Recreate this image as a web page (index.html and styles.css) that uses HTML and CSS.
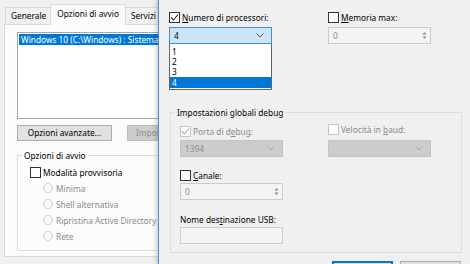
FILE: index.html
```html
<!DOCTYPE html>
<html lang="it">
<head>
  <meta charset="UTF-8">
  <title>Configurazione di sistema - Opzioni di avvio avanzate</title>
  <link rel="stylesheet" href="styles.css">
</head>
<body>
  <!-- background window: msconfig, boot tab -->
  <div class="window msconfig">
    <div class="tabs">
      <div class="tab">Generale</div>
      <div class="tab active">Opzioni di avvio</div>
      <div class="tab">Servizi</div>
      <div class="tab">Avvio</div>
    </div>
    <div class="tab-panel">
      <div class="listbox">
        <div class="list-row selected">Windows 10 (C:\Windows) : Sistema operativo corrente; Sistema operativo predefinito</div>
      </div>
      <div class="button-row">
        <div class="button wide">Opzioni avanzate...</div>
        <div class="button disabled">Imposta come predefinito</div>
      </div>
      <fieldset class="group boot-group">
        <legend>Opzioni di avvio</legend>
        <div class="group-body">
          <div class="check-row">
            <span class="checkbox"></span>
            <span>Modalità provvisoria</span>
          </div>
          <div class="radio-row"><span class="radio"></span><span>Minima</span></div>
          <div class="radio-row"><span class="radio"></span><span>Shell alternativa</span></div>
          <div class="radio-row"><span class="radio"></span><span>Ripristina Active Directory</span></div>
          <div class="radio-row"><span class="radio"></span><span>Rete</span></div>
        </div>
      </fieldset>
    </div>
  </div>

  <!-- foreground dialog: advanced boot options -->
  <div class="window dialog">
    <div class="columns top-columns">
      <div class="col">
        <div class="check-row">
          <span class="checkbox checked">
            <svg width="9" height="9" viewBox="0 0 9 9"><polyline points="1,4.5 3.5,7 8,1.5" fill="none" stroke="#222" stroke-width="1.1"/></svg>
          </span>
          <span><u>N</u>umero di processori:</span>
        </div>
        <div class="combo-wrap">
          <div class="combo focused">
            <span>4</span>
            <svg class="chevron" width="8" height="5" viewBox="0 0 8 5"><polyline points="0.5,0.5 4,4 7.5,0.5" fill="none" stroke="#555" stroke-width="1"/></svg>
          </div>
          <div class="dropdown">
            <div class="dropdown-item">1</div>
            <div class="dropdown-item">2</div>
            <div class="dropdown-item">3</div>
            <div class="dropdown-item selected">4</div>
          </div>
        </div>
      </div>
      <div class="col">
        <div class="check-row">
          <span class="checkbox"></span>
          <span><u>M</u>emoria max:</span>
        </div>
        <div class="spinbox">
          <span>0</span>
          <span class="spin-arrows">
            <svg width="5" height="9" viewBox="0 0 5 9"><polygon points="2.5,1 4.5,3.5 0.5,3.5" fill="#8a8a8a"/><polygon points="0.5,5.5 4.5,5.5 2.5,8" fill="#8a8a8a"/></svg>
          </span>
        </div>
      </div>
    </div>

    <fieldset class="group debug-group">
      <legend>Impostazioni globali debug</legend>
      <div class="columns debug-columns">
        <div class="col">
          <div class="check-row disabled-text porta">
            <span class="checkbox checked disabled">
              <svg width="9" height="9" viewBox="0 0 9 9"><polyline points="1,4.5 3.5,7 8,1.5" fill="none" stroke="#a8a8a8" stroke-width="1.1"/></svg>
            </span>
            <span>Porta di d<u>e</u>bug:</span>
          </div>
          <div class="combo disabled">
            <span>1394</span>
            <svg class="chevron" width="8" height="5" viewBox="0 0 8 5"><polyline points="0.5,0.5 4,4 7.5,0.5" fill="none" stroke="#aaa" stroke-width="1"/></svg>
          </div>
          <div class="check-row canale">
            <span class="checkbox"></span>
            <span><u>C</u>anale:</span>
          </div>
          <div class="spinbox">
            <span>0</span>
            <span class="spin-arrows">
              <svg width="5" height="9" viewBox="0 0 5 9"><polygon points="2.5,1 4.5,3.5 0.5,3.5" fill="#8a8a8a"/><polygon points="0.5,5.5 4.5,5.5 2.5,8" fill="#8a8a8a"/></svg>
            </span>
          </div>
          <div class="field-label">Nome des<u>t</u>inazione USB:</div>
          <div class="textbox"></div>
        </div>
        <div class="col">
          <div class="check-row disabled-text baud">
            <span class="checkbox disabled"></span>
            <span>Velocità in <u>b</u>aud:</span>
          </div>
          <div class="combo disabled">
            <span></span>
            <svg class="chevron" width="8" height="5" viewBox="0 0 8 5"><polyline points="0.5,0.5 4,4 7.5,0.5" fill="none" stroke="#aaa" stroke-width="1"/></svg>
          </div>
        </div>
      </div>
    </fieldset>

    <div class="dialog-buttons">
      <div class="button default"></div>
      <div class="button"></div>
    </div>
  </div>
</body>
</html>
```

FILE: styles.css
```css
:root {
  --window-bg: #f0f0f0;
  --panel-bg: #fcfcfc;
  --border: #d9d9d9;
  --accent: #0078d7;
  --disabled-text: #8a8a8a;
}

body, html {
  margin: 0;
  padding: 0;
  width: 470px;
  height: 264px;
  overflow: hidden;
  background: var(--window-bg);
  font-family: 'Noto Sans', 'DejaVu Sans', sans-serif;
  font-size: 8.3px;
  color: #000;
}

u {
  text-decoration-thickness: 1px;
  text-underline-offset: 1px;
}

/* windows sit on a free desktop */
.window {
  position: absolute;
  top: 0;
  height: 264px;
  box-sizing: border-box;
  background: var(--window-bg);
}

.msconfig {
  left: 0;
  width: 340px;
  padding: 4px 0 0 4px;
}

.dialog {
  left: 158px;
  width: 316px;
  border-left: 1px solid #4a8fd6;
  box-shadow: -2px 0 4px rgba(0, 0, 0, 0.18);
  padding: 11px 0 0 10px;
  overflow: hidden;
}

/* tabs */
.tabs {
  display: flex;
  align-items: flex-end;
  height: 20px;
  padding-left: 1px;
}

.tab {
  height: 17px;
  line-height: 16px;
  padding: 0 5px;
  box-sizing: border-box;
  border: 1px solid var(--border);
  border-bottom: none;
  margin-right: -1px;
  white-space: nowrap;
}

.tab.active {
  height: 21px;
  line-height: 18px;
  padding: 0 6px;
  background: var(--panel-bg);
  margin: 0 -1px -1px -1px;
  position: relative;
  z-index: 1;
}

.tab-panel {
  height: 233px;
  box-sizing: border-box;
  border: 1px solid var(--border);
  background: var(--panel-bg);
  padding: 7px 0 0 12px;
}

.listbox {
  height: 87px;
  box-sizing: border-box;
  border: 1px solid #a8a8a8;
  background: #fff;
  padding: 1px;
}

.list-row {
  height: 11px;
  line-height: 11px;
  padding-left: 2px;
  white-space: nowrap;
  overflow: hidden;
}

.list-row.selected {
  background: var(--accent);
  color: #fff;
}

.button-row {
  display: flex;
  gap: 15px;
  margin-top: 6px;
}

.button {
  height: 16px;
  line-height: 14px;
  box-sizing: border-box;
  border: 1px solid #adadad;
  background: #e1e1e1;
  text-align: center;
  white-space: nowrap;
  padding: 0 8px;
}

.button.wide {
  width: 95px;
}

.button.disabled {
  background: #cccccc;
  border-color: #bfbfbf;
  color: #8c8c8c;
}

/* group boxes */
.group {
  margin: 0;
  border: 1px solid #dcdcdc;
  padding: 0 0 0 4px;
}

.group legend {
  padding: 0 2px;
  line-height: 11px;
}

.boot-group {
  margin-top: 9px;
  width: 340px;
  height: 101px;
  box-sizing: border-box;
}

.group-body {
  padding: 3px 0 0 8px;
}

.check-row {
  display: flex;
  align-items: center;
  gap: 2px;
  height: 12px;
  white-space: nowrap;
}

.group-body .check-row {
  height: 16px;
}

.checkbox {
  width: 11px;
  height: 11px;
  box-sizing: border-box;
  border: 1px solid #333;
  background: #fff;
  display: flex;
  align-items: center;
  justify-content: center;
  flex: none;
}

.checkbox.disabled {
  border-color: #c4c4c4;
}

.disabled-text {
  color: var(--disabled-text);
}

.radio-row {
  display: flex;
  align-items: center;
  gap: 3px;
  height: 16px;
  padding-left: 13px;
  color: var(--disabled-text);
  white-space: nowrap;
}

.radio {
  width: 10px;
  height: 10px;
  box-sizing: border-box;
  border: 1px solid #cfcfcf;
  border-radius: 50%;
  background: #fafafa;
  flex: none;
}

/* dialog controls */
.columns {
  display: grid;
}

.top-columns {
  grid-template-columns: 159px 110px;
}

.debug-columns {
  grid-template-columns: 148px 110px;
}

.combo-wrap {
  position: relative;
  width: 103px;
  margin-top: 4px;
}

.combo {
  width: 103px;
  height: 17px;
  box-sizing: border-box;
  border: 1px solid #adadad;
  display: flex;
  align-items: center;
  justify-content: space-between;
  padding: 0 7px 0 4px;
}

.combo.focused {
  background: #cce4f7;
  border-color: #3c8ed8;
}

.dropdown {
  position: absolute;
  top: 17px;
  left: 0;
  width: 103px;
  box-sizing: border-box;
  border: 1px solid #646464;
  border-top: none;
  background: #fff;
  padding-bottom: 1px;
  z-index: 2;
}

.dropdown-item {
  height: 10px;
  line-height: 10px;
  padding-left: 2px;
}

.dropdown-item:first-child {
  margin-top: 3px;
}

.dropdown-item.selected {
  height: 11px;
  line-height: 11px;
  background: var(--accent);
  color: #fff;
}

.spinbox {
  width: 103px;
  height: 17px;
  box-sizing: border-box;
  border: 1px solid #cccccc;
  background: #f4f4f4;
  color: #8c8c8c;
  display: flex;
  align-items: center;
  justify-content: space-between;
  padding: 0 3px 0 4px;
  margin-top: 4px;
}

.spin-arrows {
  display: flex;
}

.debug-group {
  margin: 63px 0 0 1px;
  width: 292px;
  height: 146px;
  box-sizing: border-box;
}

.debug-columns {
  padding: 5px 0 0 5px;
}

.check-row.porta {
  margin-top: 2px;
}

.combo.disabled {
  background: #cccccc;
  border-color: #c4c4c4;
  color: #8c8c8c;
  margin-top: 3px;
}

.baud + .combo.disabled {
  margin-top: 5px;
}

.check-row.canale {
  margin-top: 12px;
}

.debug-columns .spinbox {
  margin-top: 2px;
}

.field-label {
  margin-top: 14px;
  line-height: 12px;
  white-space: nowrap;
}

.textbox {
  width: 103px;
  height: 17px;
  box-sizing: border-box;
  border: 1px solid #cccccc;
  background: #f4f4f4;
  margin-top: 1px;
}

.dialog-buttons {
  display: flex;
  gap: 7px;
  margin: 8px 0 0 163px;
}

.dialog-buttons .button {
  width: 61px;
  height: 20px;
}

.button.default {
  border: 2px solid var(--accent);
}
```
